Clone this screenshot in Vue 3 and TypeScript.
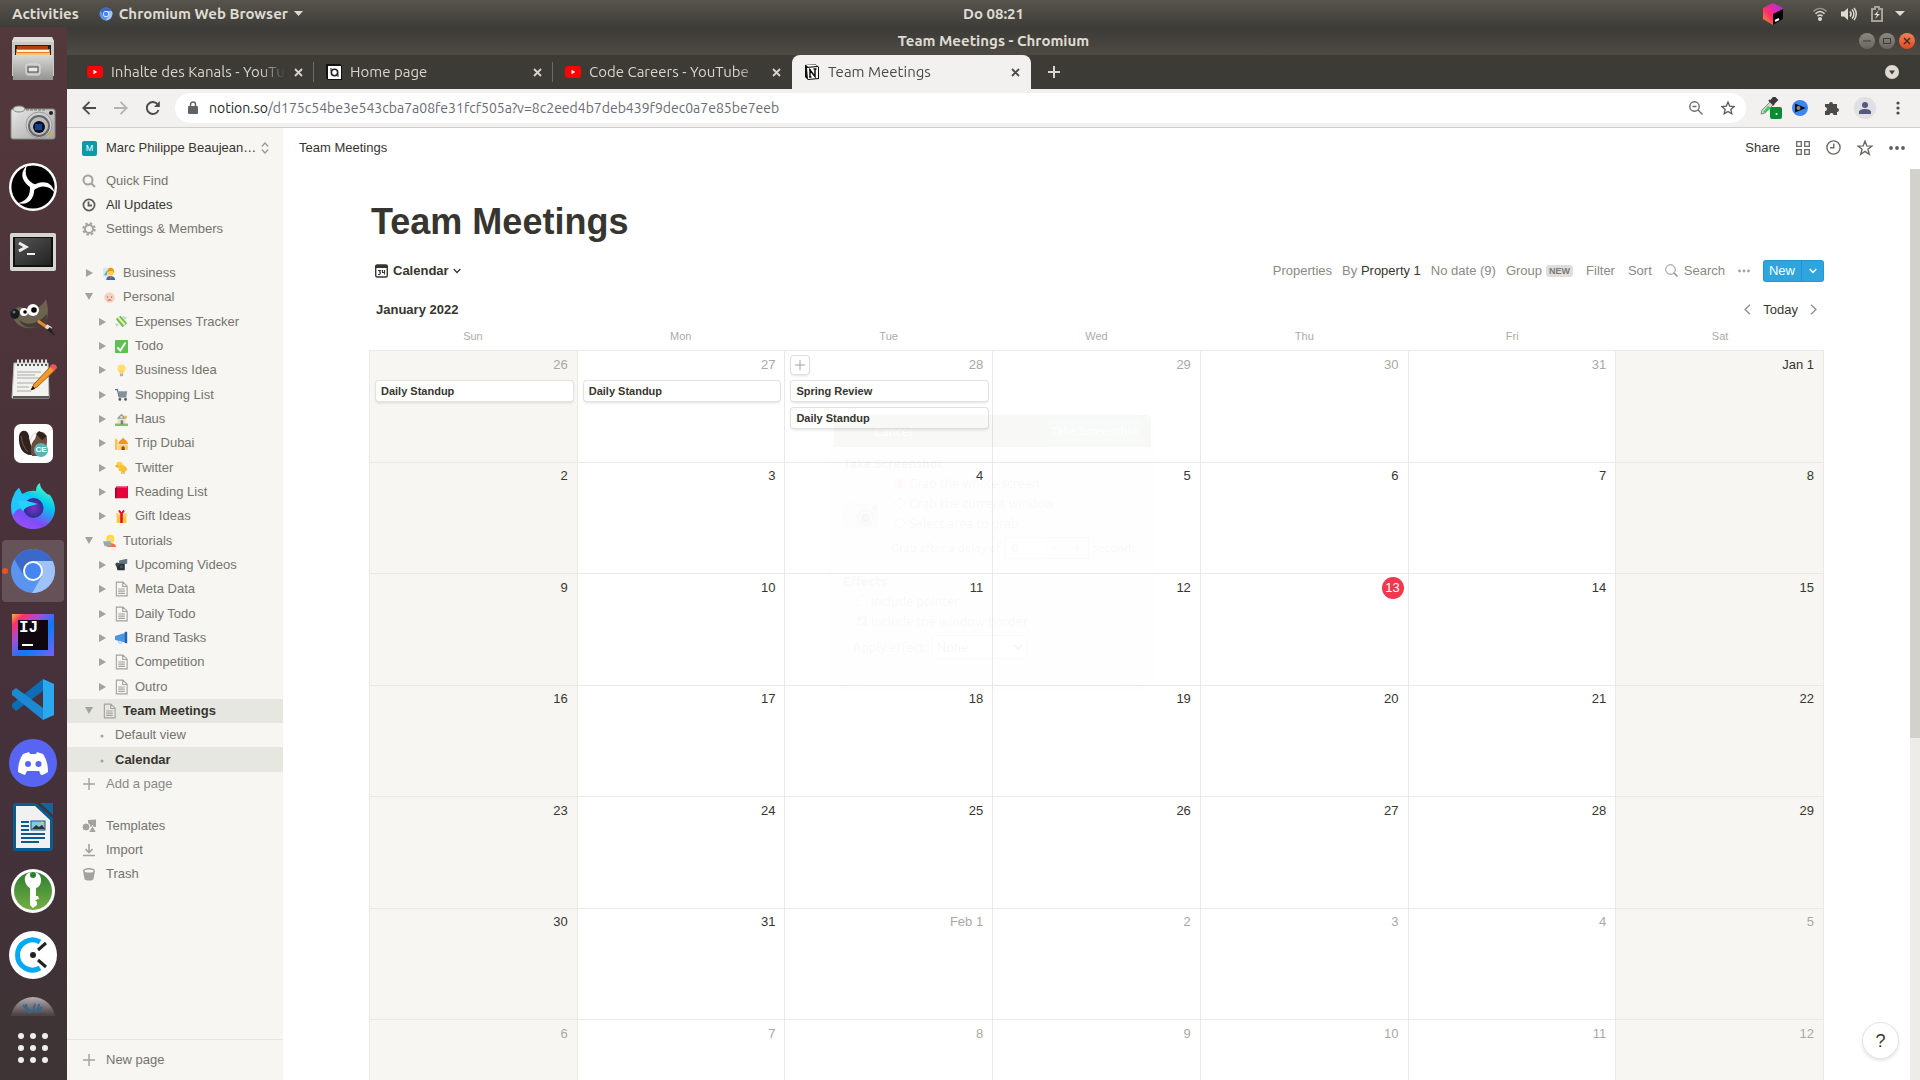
<script setup lang="ts">
interface TreeRow {
  label: string
  icon?: string
  level: number
  kind: 'closed' | 'open' | 'view' | 'add'
  active?: boolean
}

interface DockApp {
  id: string
  name: string
  active?: boolean
  mark?: string
}

interface Day {
  label: string
  muted?: boolean
  today?: boolean
  weekend: boolean
  hovered?: boolean
  events: string[]
}

const dockApps: DockApp[] = [
  { id: 'files', name: 'Files' },
  { id: 'camera', name: 'Screenshot' },
  { id: 'obs', name: 'OBS Studio' },
  { id: 'terminal', name: 'Terminal' },
  { id: 'gimp', name: 'GIMP' },
  { id: 'notes', name: 'Text Editor' },
  { id: 'dbeaver', name: 'DBeaver', mark: 'CE' },
  { id: 'firefox', name: 'Firefox Developer Edition' },
  { id: 'chromium', name: 'Chromium', active: true },
  { id: 'idea', name: 'IntelliJ IDEA', mark: 'IJ' },
  { id: 'vscode', name: 'Visual Studio Code' },
  { id: 'discord', name: 'Discord' },
  { id: 'writer', name: 'LibreOffice Writer' },
  { id: 'keepass', name: 'KeePassXC' },
  { id: 'clockify', name: 'Clockify' },
  { id: 'planet', name: 'Eclipse' },
]

const tabs = [
  { title: 'Inhalte des Kanals - YouTube', icon: 'youtube' },
  { title: 'Home page', icon: 'homepage' },
  { title: 'Code Careers - YouTube', icon: 'youtube' },
  { title: 'Team Meetings', icon: 'notion', active: true },
]

const tree: TreeRow[] = [
  { label: 'Business', icon: 'e-teacher', level: 0, kind: 'closed' },
  { label: 'Personal', icon: 'e-face', level: 0, kind: 'open' },
  { label: 'Expenses Tracker', icon: 'e-money', level: 1, kind: 'closed' },
  { label: 'Todo', icon: 'e-check', level: 1, kind: 'closed' },
  { label: 'Business Idea', icon: 'e-bulb', level: 1, kind: 'closed' },
  { label: 'Shopping List', icon: 'e-cart', level: 1, kind: 'closed' },
  { label: 'Haus', icon: 'e-house', level: 1, kind: 'closed' },
  { label: 'Trip Dubai', icon: 'e-mosque', level: 1, kind: 'closed' },
  { label: 'Twitter', icon: 'e-bird', level: 1, kind: 'closed' },
  { label: 'Reading List', icon: 'e-book', level: 1, kind: 'closed' },
  { label: 'Gift Ideas', icon: 'e-gift', level: 1, kind: 'closed' },
  { label: 'Tutorials', icon: 'e-coder', level: 0, kind: 'open' },
  { label: 'Upcoming Videos', icon: 'e-video', level: 1, kind: 'closed' },
  { label: 'Meta Data', icon: 'page', level: 1, kind: 'closed' },
  { label: 'Daily Todo', icon: 'page', level: 1, kind: 'closed' },
  { label: 'Brand Tasks', icon: 'e-horn', level: 1, kind: 'closed' },
  { label: 'Competition', icon: 'page', level: 1, kind: 'closed' },
  { label: 'Outro', icon: 'page', level: 1, kind: 'closed' },
  { label: 'Team Meetings', icon: 'page', level: 0, kind: 'open', active: true },
  { label: 'Default view', level: 1, kind: 'view' },
  { label: 'Calendar', level: 1, kind: 'view', active: true },
  { label: 'Add a page', level: 0, kind: 'add' },
]

const weekdays = ['Sun', 'Mon', 'Tue', 'Wed', 'Thu', 'Fri', 'Sat']

const events: Record<string, string[]> = {
  '2021-11-26': ['Daily Standup'],
  '2021-11-27': ['Daily Standup'],
  '2021-11-28': ['Spring Review', 'Daily Standup'],
}

const days: Day[] = Array.from({ length: 49 }, (_, i) => {
  const date = new Date(2021, 11, 26 + i)
  const n = date.getDate()
  const month = date.getMonth()
  const names: Record<number, string> = { 0: 'Jan', 1: 'Feb' }
  return {
    label: n === 1 ? `${names[month]} 1` : String(n),
    muted: month !== 0,
    today: month === 0 && n === 13,
    weekend: i % 7 === 0 || i % 7 === 6,
    hovered: i === 2,
    events: events[`${date.getFullYear()}-${month}-${n}`] ?? [],
  }
})
</script>

<template>
  <svg class="sprite" width="0" height="0" aria-hidden="true">
    <defs>
      <linearGradient id="g-steel" x1="0" y1="0" x2="0" y2="1"><stop offset="0" stop-color="#d8d8d6" /><stop offset="1" stop-color="#939391" /></linearGradient>
      <linearGradient id="g-cam" x1="0" y1="0" x2="1" y2="1"><stop offset="0" stop-color="#e8e8e8" /><stop offset="1" stop-color="#a4a4a4" /></linearGradient>
      <linearGradient id="g-term" x1="0" y1="0" x2="1" y2="1"><stop offset="0" stop-color="#555" /><stop offset="1" stop-color="#222" /></linearGradient>
      <linearGradient id="g-fox" x1="0.8" y1="0" x2="0.3" y2="1"><stop offset="0" stop-color="#54ffbd" /><stop offset="0.4" stop-color="#00c8f0" /><stop offset="0.75" stop-color="#7b4df5" /><stop offset="1" stop-color="#9a50ff" /></linearGradient>
      <radialGradient id="g-globe"><stop offset="0" stop-color="#7a35c9" /><stop offset="1" stop-color="#2f2c94" /></radialGradient>
      <linearGradient id="g-idea" x1="0" y1="0" x2="1" y2="1"><stop offset="0" stop-color="#fdb338" /><stop offset="0.15" stop-color="#fe2f6b" /><stop offset="0.35" stop-color="#a04fd8" /><stop offset="0.6" stop-color="#087cfa" /><stop offset="1" stop-color="#7b5ff5" /></linearGradient>
      <linearGradient id="g-key" x1="0" y1="0" x2="0" y2="1"><stop offset="0" stop-color="#2f7d32" /><stop offset="1" stop-color="#74b043" /></linearGradient>
      <linearGradient id="g-planet" x1="0" y1="0" x2="0" y2="1"><stop offset="0" stop-color="#b4aeb2" /><stop offset="0.4" stop-color="#4f4347" /><stop offset="1" stop-color="#40363a" /></linearGradient>
      <linearGradient id="g-cube" x1="0" y1="1" x2="1" y2="0"><stop offset="0" stop-color="#ff9a1f" /><stop offset="0.4" stop-color="#ff2d6d" /><stop offset="1" stop-color="#a32bff" /></linearGradient>
      <clipPath id="c-chrome"><circle cx="24" cy="24" r="22" /></clipPath>
    </defs>

    <symbol id="files" viewBox="0 0 48 48">
      <path d="M5 2h38l2 4v35H3V6z" fill="#c9c9c7" /><path d="M5 2h38l2 5H3z" fill="#dcdcda" />
      <path d="M6 10h36v12H6z" fill="#222" /><path d="M8 11h31v3H8z" fill="#b23e12" /><path d="M7 14h34v8H7z" fill="#e77c22" /><path d="M8 15h32v2H8z" fill="#fff0d8" /><path d="M7 18h34v2H7z" fill="#f7c27a" />
      <path d="M4 20h40v25H4z" fill="url(#g-steel)" /><rect x="17" y="29" width="14" height="11" rx="2" fill="#c2c2c2" stroke="#ddd" /><rect x="19" y="32" width="10" height="5" fill="#e8e8e6" stroke="#444" />
    </symbol>
    <symbol id="camera" viewBox="0 -1 48 48">
      <rect x="2" y="9" width="44" height="30" rx="2" fill="url(#g-cam)" stroke="#8a8a8a" /><ellipse cx="10" cy="9" rx="6" ry="3" fill="#ddd" stroke="#888" /><path d="M17 10h20" stroke="#777" stroke-dasharray="3 1" />
      <circle cx="30" cy="25" r="13" fill="#d0d0d0" stroke="#999" /><circle cx="30" cy="26" r="10" fill="#bbb" stroke="#666" stroke-width="2" /><circle cx="30" cy="27" r="6" fill="#0c0f18" /><rect x="26" y="24" width="7" height="6" fill="#16408c" /><circle cx="42" cy="13" r="2" fill="#222" /><rect x="40" y="33" width="3" height="3" fill="#e8a23a" />
    </symbol>
    <symbol id="obs" viewBox="0 0 48 48">
      <circle cx="24" cy="24" r="24" fill="#fff" /><circle cx="24" cy="24" r="21.6" fill="#000" />
      <g fill="#fff">
        <path d="M25 26C14 21 9 11 18 2.500C15 10 17 18 27 22z" />
        <path d="M25 26C14 21 9 11 18 2.500C15 10 17 18 27 22z" transform="rotate(120 24 24)" />
        <path d="M25 26C14 21 9 11 18 2.500C15 10 17 18 27 22z" transform="rotate(240 24 24)" />
      </g>
    </symbol>
    <symbol id="terminal" viewBox="0 -1 48 48">
      <rect x="1" y="5" width="46" height="38" rx="2" fill="#d5d5d2" /><rect x="4" y="9" width="40" height="30" fill="#111" /><rect x="6" y="10" width="36" height="27" fill="url(#g-term)" /><path d="M10 15l7 4-7 4" fill="none" stroke="#eee" stroke-width="3" /><path d="M18 26h8" stroke="#eee" stroke-width="2" />
    </symbol>
    <symbol id="gimp" viewBox="0 0 48 48">
      <path d="M4 20c5-6 9-4 13-2c8 2 15-1 20-10c4 14 2 26-8 28c-12 3-20 0-25-9z" fill="#6b624f" /><path d="M10 29c8 6 18 5 28-6c0 8-4 13-10 13c-10 2-15-1-18-7z" fill="#453f33" />
      <ellipse cx="6" cy="23" rx="4.500" ry="5" fill="#171b22" /><circle cx="5" cy="21" r="1.500" fill="#6a7280" /><circle cx="15" cy="21" r="4" fill="#fff" /><circle cx="24" cy="19" r="6" fill="#fff" /><circle cx="16" cy="21" r="1.800" /><circle cx="25" cy="19" r="2.800" />
      <path d="M29 30l10 7" stroke="#e8892b" stroke-width="3" /><path d="M37 35l5 3" stroke="#ddd" stroke-width="4" /><path d="M41 36l5 9-8-6z" fill="#222" />
    </symbol>
    <symbol id="notes" viewBox="0 0 48 48">
      <path d="M5 8h34l1 35H3z" fill="#f2f2ee" stroke="#bbb" /><path d="M4 42h36" stroke="#555" stroke-width="2" /><path d="M8 7h30" stroke="#ddd" stroke-width="5" stroke-dasharray="2 2" /><path d="M8 10h30" stroke="#555" stroke-dasharray="2 2" stroke-width="2" />
      <path d="M8 17h24M8 20h18M8 23h26M8 28h20M8 32h12M8 36h14" stroke="#aaa" /><path d="M22 35l3-6L42 11l4 4L28 32z" fill="#f39a2d" stroke="#a55a14" /><path d="M41 11c2-3 7-2 7 2l-3 3z" fill="#e55" /><path d="M22 35l2-4 2 3z" fill="#111" />
    </symbol>
    <symbol id="dbeaver" viewBox="0 0 48 48">
      <rect x="5" y="5" width="39" height="39" rx="7" fill="#fff" /><path d="M22 36C14 36 9 28 10 17c1-7 9-7 10 0c0 5 3 8 3 19z" fill="#30231e" /><path d="M12 17c1 7 3 12 7 16" stroke="#6b564c" fill="none" /><path d="M23 37c-3-8 0-14 3-17l2-6c4-3 10 0 10 6c0 4 0 10-4 17z" fill="#6d4c3d" /><path d="M27 15l3-3 8 5-5 4z" fill="#2f211b" /><path d="M22 24c-1-6 1-8 5-10" stroke="#e9e4df" stroke-width="1.500" fill="none" /><circle cx="32" cy="31" r="7" fill="#56b6b5" />
    </symbol>
    <symbol id="firefox" viewBox="0 0 48 48">
      <path d="M5 12c1-4 4-6 5-7l3 6c5-3 10-4 14-3c0-4 1-6 4-8c0 5 4 8 7 11l3 1c5 7 6 14 4 20c-3 9-11 14-20 14C12 46 2 38 2 26c0-5 1-10 3-14z" fill="url(#g-fox)" /><path d="M5 12c1-4 4-6 5-7l3 6 4 1 7 3 5 5-8 2-8 3c-4 0-8 4-9 8c-3-8-2-16 1-21z" fill="#1ec8ff" /><circle cx="24.500" cy="25" r="10" fill="url(#g-globe)" /><path d="M9 18l9 0 11 3-8 2c-3 1-5 2-7 5c-2-2-4-6-5-10z" fill="#23d3fb" />
    </symbol>
    <symbol id="chromium" viewBox="0 0 48 48">
      <g clip-path="url(#c-chrome)"><path d="M0 0h48v48H0z" fill="#5b94ef" /><path d="M4 10L24 -2l24 10v10H24l-9 11z" fill="#3a69c9" /><path d="M24 14h24v34H22l11-19z" fill="#9fc2fa" /></g><circle cx="24" cy="24" r="10" fill="#fff" /><circle cx="24" cy="24" r="8" fill="#4586f3" />
    </symbol>
    <symbol id="idea" viewBox="0 0 48 48">
      <rect x="3" y="3" width="42" height="42" fill="url(#g-idea)" /><rect x="9" y="9" width="30" height="30" fill="#100610" /><path d="M13 34h11" stroke="#fff" stroke-width="2" />
    </symbol>
    <symbol id="vscode" viewBox="0 0 48 48">
      <path d="M34 4v12L7 36l-4-4v-3z" fill="#0f6db5" /><path d="M34 45V33L7 13l-4 3v4z" fill="#1c8ad3" /><path d="M34 4l11 5v31l-11 5z" fill="#2aa8f0" />
    </symbol>
    <symbol id="discord" viewBox="0 0 48 48">
      <circle cx="24" cy="24" r="24" fill="#5865f2" /><path d="M14 15l6-2 1 2h6l1-2 6 2c4 6 5 12 5 18c-3 2-5 3-7 3l-2-4h-12l-2 4c-3-1-5-2-7-3c0-6 1-12 5-18z" fill="#fff" /><circle cx="19" cy="25" r="3" fill="#5865f2" /><circle cx="29.500" cy="25" r="3" fill="#5865f2" />
    </symbol>
    <symbol id="writer" viewBox="0 0 48 48">
      <path d="M7 0h20l17 15v30a3 3 0 0 1-3 3H7a3 3 0 0 1-3-3V3a3 3 0 0 1 3-3z" fill="#0b5c8c" /><path d="M7 3h19l15 14v28H7z" fill="#f1f1f1" /><path d="M31 0h13v12z" fill="#0e689e" /><path d="M12 19h8M12 23h8M12 27h8M12 31h24M12 35h24M12 39h18" stroke="#0b5c8c" stroke-width="2" /><rect x="22" y="18" width="14" height="9" fill="#83c9ea" stroke="#0b5c8c" /><path d="M23 26l4-4 3 2 3-2 3 4z" fill="#333" /><circle cx="33" cy="20" r="1.500" fill="#f0c23a" />
    </symbol>
    <symbol id="keepass" viewBox="0 0 48 48">
      <circle cx="24" cy="24" r="22" fill="#fff" /><circle cx="24" cy="24" r="19" fill="url(#g-key)" /><path d="M24 5c-6 0-9 4-8 9c1 4 3 6 5 7v17l3 3 4-3v-3l-2-2 4-1-1-3h-2v-8c4-1 5-5 5-8c0-5-3-8-8-8z" fill="#fff" /><circle cx="24" cy="8" r="3" fill="#2f7d32" />
    </symbol>
    <symbol id="clockify" viewBox="0 0 48 48">
      <circle cx="24" cy="24" r="24" fill="#fff" /><path d="M31 11a15 15 0 1 0 0 26" fill="none" stroke="#03a9f4" stroke-width="5" /><circle cx="24" cy="24" r="3" fill="#222" /><path d="M29 19l8-7M29 29l8 7" stroke="#222" stroke-width="3" />
    </symbol>
    <symbol id="planet" viewBox="0 0 48 48">
      <circle cx="24" cy="24" r="22" fill="url(#g-planet)" /><path d="M14 10l7 8M17 9c0 5 3 6 5 9M24 17l2-8M26 17c3-3 4-5 4-8M28 17l5-5" stroke="#34688f" stroke-width="2" fill="none" />
    </symbol>

    <symbol id="youtube" viewBox="0 0 16 16"><rect x="0" y="2" width="16" height="12" rx="3" fill="#f00" /><path d="M6.500 5.800v4.400L10.200 8z" fill="#fff" /></symbol>
    <symbol id="homepage" viewBox="0 0 16 16"><path d="M0 0h14l2 2v14H2L0 14z" fill="#111" /><rect x="2" y="2" width="13" height="13" fill="#fff" /><circle cx="8.500" cy="8.500" r="3.200" fill="none" stroke="#222" stroke-width="1.600" /><path d="M5 4v3M12 10v3" stroke="#222" /></symbol>
    <symbol id="notion" viewBox="0 0 16 16"><path d="M1 1l10-1 4 3v12l-11 1-3-3z" fill="#111" /><path d="M3 4l11-1v11L4 15z" fill="#fff" /><path d="M2 1l9-.5 2 1.500-9 .8z" fill="#fff" /><path d="M6 13V6l5 6.500V5M5 6h2M9.500 5h3M5 13h2.500" stroke="#111" stroke-width="1.500" fill="none" /></symbol>

    <symbol id="page" viewBox="0 0 16 16"><path d="M2.500.7h7L14 5v10.300H2.500zM9.300 1v4.300H14M4.500 8h7M4.500 10.300h7M4.500 12.600h7" fill="none" stroke="#a3a29e" stroke-width="1.200" /></symbol>
    <symbol id="e-teacher" viewBox="0 0 16 16"><rect x="0" y="1" width="12" height="11" fill="#d5eaf0" /><path d="M1 10l4-6v6z" fill="#6ba7c4" /><path d="M4 16c0-4 3-5 5-5s6 1 6 5z" fill="#2c6fb5" /><path d="M8 11h3l-1.500 5z" fill="#e55" /><circle cx="9.500" cy="6.500" r="4" fill="#ffcf4b" /><path d="M5 7c0-8 9-8 9 0l-2-2-4 0z" fill="#e69a12" /></symbol>
    <symbol id="e-face" viewBox="0 0 16 16"><circle cx="8" cy="8" r="6.500" fill="#f5d3c3" /><circle cx="5.500" cy="7.500" r="1" fill="#a9786b" /><circle cx="10.500" cy="7.500" r="1" fill="#a9786b" /><path d="M5 12c2-3 4-3 6 0z" fill="#d77" /></symbol>
    <symbol id="e-money" viewBox="0 0 16 16"><path d="M1 5l6-4 8 9-6 5z" fill="#6cc25c" /><path d="M4 3l8 9" stroke="#f4e8a6" stroke-width="2.500" /><path d="M9 1l6 2-4 3zM0 10l5 1-3 4z" fill="#c3d9c0" /></symbol>
    <symbol id="e-check" viewBox="0 0 16 16"><rect width="16" height="16" rx="1" fill="#60bf52" /><path d="M3 9l3.500 4L13 3" fill="none" stroke="#fff" stroke-width="2.300" /></symbol>
    <symbol id="e-bulb" viewBox="0 0 16 16"><circle cx="8" cy="5.500" r="5" fill="#ffe070" /><path d="M5 8h6l-1 4H6z" fill="#f9d45c" /><path d="M6 12h4v3H6z" fill="#a8b2b8" /></symbol>
    <symbol id="e-cart" viewBox="0 0 16 16"><path d="M0 2h3l2 9h9" fill="none" stroke="#62727a" stroke-width="1.500" /><path d="M4 4h11l-1 6H5z" fill="#82939c" /><circle cx="6" cy="14" r="1.700" fill="#4d5a60" /><circle cx="13" cy="14" r="1.700" fill="#4d5a60" /></symbol>
    <symbol id="e-house" viewBox="0 0 16 16"><path d="M3 7h10v7H3z" fill="#efe3b5" /><path d="M2 7l6-6 6 6z" fill="#8b9a9f" /><path d="M0 13h16v3H0z" fill="#83bd68" /><path d="M7 9h3v5H7z" fill="#6d7d96" /><circle cx="8" cy="5" r="1.500" fill="#efe3b5" /><circle cx="13" cy="5" r="2" fill="#e5b95c" /></symbol>
    <symbol id="e-mosque" viewBox="0 0 16 16"><path d="M1 1l2 3v12H0V4z" fill="#ffc24b" /><path d="M4 10h12v6H4z" fill="#ffcf66" /><path d="M4 9c0-4 4-5 6-8c2 3 6 4 6 8z" fill="#f5931e" /><path d="M8 16v-3c1-2 3-2 4 0v3z" fill="#9b4a22" /></symbol>
    <symbol id="e-bird" viewBox="0 0 16 16"><circle cx="5.500" cy="5" r="4" fill="#ffd23b" /><path d="M4 6c4-3 11 0 11 5l-4 3-6-2z" fill="#fbc02d" /><path d="M0 6l3-1v3z" fill="#f57f17" /><path d="M9 13l-1 3M11 13v3" stroke="#e07a1a" /></symbol>
    <symbol id="e-book" viewBox="0 0 16 16"><path d="M2 0h14v15H1V2z" fill="#e4003a" /><path d="M2 1h13" stroke="#f5c2cf" /><path d="M1 2v13" stroke="#a50028" stroke-width="2" /></symbol>
    <symbol id="e-gift" viewBox="0 0 16 16"><path d="M2 6h12v10H2z" fill="#f7c948" /><path d="M1 4h14v3H1z" fill="#fbd869" /><path d="M6.500 3h3v13h-3z" fill="#e4003a" /><path d="M8 4C4 4 3 0 6 0l2 3 2-3c3 0 2 4-2 4z" fill="#e4003a" /></symbol>
    <symbol id="e-coder" viewBox="0 0 16 16"><circle cx="9" cy="6" r="5" fill="#ffe11a" /><circle cx="9" cy="7" r="3" fill="#f4cfa0" /><path d="M5 16c0-4 2-5 4-5s7 1 7 5z" fill="#f0713d" /><path d="M0 9h9l2 6H2z" fill="#93a9b8" /></symbol>
    <symbol id="e-video" viewBox="0 0 16 16"><path d="M5 3l10-2v6L5 8z" fill="#607684" /><path d="M1 7h11v8H3z" fill="#273038" /><circle cx="3" cy="8" r="2.500" fill="#3b464e" /><circle cx="8" cy="11" r="2" fill="#46535c" /></symbol>
    <symbol id="e-horn" viewBox="0 0 16 16"><path d="M0 6l13-4v12L0 11z" fill="#4a95e8" /><path d="M12 1h3v14h-3z" fill="#2560aa" /><path d="M4 12l1 3h3v-2" fill="none" stroke="#8bbdf2" /></symbol>
  </svg>

  <div class="desktop">
    <header class="panel">
      <div class="panel-left">
        <button class="panel-btn">Activities</button>
        <button class="panel-btn app-menu">
          <svg width="14" height="14"><use href="#chromium" /></svg>
          Chromium Web Browser
          <svg width="9" height="5" viewBox="0 0 9 5"><path d="M0 0h9L4.500 5z" fill="currentColor" /></svg>
        </button>
      </div>
      <time class="clock">Do 08:21</time>
      <div class="tray">
        <svg class="cube" width="20" height="22" viewBox="0 0 20 22"><path d="M10 0l10 5v11l-10 6L0 16V5z" fill="url(#g-cube)" /><path d="M10 11l10-5v10l-10 6z" fill="#000" /><path d="M12 18l4-2" stroke="#fff" stroke-width="2" /></svg>
        <svg width="14" height="14" viewBox="0 0 14 14" fill="none" stroke="#dfdbd2" stroke-width="1.600"><path d="M.5 4.500c4-4 9-4 13 0" opacity=".5" /><path d="M2.500 6.800c3-3 6-3 9 0" /><path d="M4.500 9.200c2-1.800 3-1.800 5 0" /><circle cx="7" cy="12" r="1.200" fill="#dfdbd2" /></svg>
        <svg width="16" height="14" viewBox="0 0 16 14" fill="none" stroke="#dfdbd2" stroke-width="1.500"><path d="M0 4.500h3L7 1v12L3 9.500H0z" fill="#dfdbd2" stroke="none" /><path d="M9 4.500c1.300 1.500 1.300 3.500 0 5M11 2.500c2.500 2.500 2.500 6.500 0 9M13 1c3 3.500 3 8.500 0 12" /></svg>
        <svg width="12" height="16" viewBox="0 0 12 16"><path d="M1 3h3V1h4v2h3v12H1z" fill="none" stroke="#a5a29a" stroke-width="2" /><path d="M8 4L3 9h3l-2 4 5-5H6z" fill="#dfdbd2" /></svg>
        <svg class="tray-arrow" width="10" height="5" viewBox="0 0 10 5"><path d="M0 0h10L5 5z" fill="#dfdbd2" /></svg>
      </div>
    </header>

    <div class="workspace">
      <nav class="dock" aria-label="Dock">
        <div class="dock-apps">
          <button v-for="app in dockApps" :key="app.id" class="dock-app" :class="[app.id, { running: app.active }]" :aria-label="app.name">
            <svg width="48" height="48"><use :href="'#' + app.id" /></svg>
            <span v-if="app.mark" class="mark">{{ app.mark }}</span>
          </button>
        </div>
        <button class="dock-grid" aria-label="Show Applications">
          <svg width="30" height="30" viewBox="0 0 30 30" fill="#eee">
            <template v-for="r in 3" :key="r"><circle v-for="c in 3" :key="c" :cx="c * 12 - 9" :cy="r * 12 - 9" r="3" /></template>
          </svg>
        </button>
      </nav>

      <section class="window">
        <header class="titlebar">
          <span class="window-title">Team Meetings - Chromium</span>
          <div class="window-buttons">
            <button aria-label="Minimize"><svg width="8" height="8" viewBox="0 0 8 8"><path d="M0 4h8" stroke="#3c3b37" /></svg></button>
            <button aria-label="Maximize"><svg width="8" height="8" viewBox="0 0 8 8"><path d="M.5 1.500h7v5h-7z" stroke="#3c3b37" fill="none" /></svg></button>
            <button class="close" aria-label="Close"><svg width="8" height="8" viewBox="0 0 8 8"><path d="M1 1l6 6M7 1L1 7" stroke="#3c2a22" stroke-width="1.400" /></svg></button>
          </div>
        </header>

        <div class="tabs">
          <div v-for="tab in tabs" :key="tab.title" class="tab" :class="{ current: tab.active }">
            <svg class="favicon" width="16" height="16"><use :href="'#' + tab.icon" /></svg>
            <span class="tab-title">{{ tab.title }}</span>
            <button class="tab-close" aria-label="Close tab"><svg width="9" height="9" viewBox="0 0 9 9"><path d="M1 1l7 7M8 1L1 8" stroke="currentColor" stroke-width="1.800" /></svg></button>
          </div>
          <button class="tab-new" aria-label="New tab"><svg width="12" height="12" viewBox="0 0 12 12"><path d="M6 0v12M0 6h12" stroke="currentColor" stroke-width="2" /></svg></button>
          <button class="tab-search" aria-label="Search tabs"><svg width="14" height="14" viewBox="0 0 14 14"><circle cx="7" cy="7" r="7" fill="#dfdbd2" /><path d="M4 5.500h6L7 9.500z" fill="#3c3b37" /></svg></button>
        </div>

        <div class="toolbar">
          <button aria-label="Back"><svg width="14" height="14" viewBox="0 0 14 14" fill="none" stroke="#4a4a4a" stroke-width="1.800"><path d="M14 7H1M7.500.8L1.200 7l6.300 6.200" /></svg></button>
          <button aria-label="Forward"><svg width="14" height="14" viewBox="0 0 14 14" fill="none" stroke="#b4b3b0" stroke-width="1.800"><path d="M0 7h13M6.500.8L12.800 7l-6.300 6.200" /></svg></button>
          <button aria-label="Reload"><svg width="14" height="14" viewBox="0 0 14 14" fill="none" stroke="#4a4a4a" stroke-width="1.900"><path d="M12.500 9A6 6 0 1 1 11.500 3.200" /><path d="M13.800 0v6H8z" fill="#4a4a4a" stroke="none" /></svg></button>
          <div class="omnibox">
            <svg width="10" height="14" viewBox="0 0 10 14"><rect x="0" y="5" width="10" height="8" rx="1" fill="#5f6368" /><path d="M2.500 5V3.500a2.500 2.500 0 0 1 5 0V5" fill="none" stroke="#5f6368" stroke-width="1.500" /></svg>
            <span class="url"><b>notion.so</b>/d175c54be3e543cba7a08fe31fcf505a?v=8c2eed4b7deb439f9dec0a7e85be7eeb</span>
            <button aria-label="Zoom"><svg width="14" height="14" viewBox="0 0 14 14" fill="none" stroke="#6b6b6b" stroke-width="1.400"><circle cx="5.500" cy="5.500" r="4.700" /><path d="M9 9l4.500 4.500M3.500 5.500h4" /></svg></button>
            <button aria-label="Bookmark"><svg width="14" height="14" viewBox="0 0 14 14" fill="none" stroke="#5a5a5a" stroke-width="1.300"><path d="M7 1l1.700 4.100 4.500.4-3.400 2.900 1 4.400L7 10.500l-3.800 2.300 1-4.400L.8 5.500l4.500-.4z" /></svg></button>
          </div>
          <button class="ext picker" aria-label="Color picker"><svg width="22" height="22" viewBox="0 0 22 22"><path d="M11 4l3 3-9 9-4 1 1-4z" fill="#d6d6d6" stroke="#888" /><path d="M8 9l3 2-6 5-2-1z" fill="#2bd84f" /><path d="M9 3l5 5M11 4l3-4 3 3-4 4z" stroke="#3a3a3a" stroke-width="2" fill="#3a3a3a" /><rect x="10" y="10" width="12" height="12" rx="2" fill="#0b8a34" /><circle cx="16.500" cy="17" r="1" fill="#fff" /></svg></button>
          <button class="ext" aria-label="Player"><svg width="16" height="16" viewBox="0 0 16 16"><circle cx="8" cy="8" r="8" fill="#3b86f7" /><path d="M3 3.500L14 8 3 12.500z" fill="#111" /><circle cx="6.500" cy="8" r="2" fill="#888" /></svg></button>
          <button class="ext puzzle" aria-label="Extensions"><svg width="16" height="16" viewBox="0 0 16 16"><path d="M1 4h4a2 2 0 1 1 4 0h4v4a2 2 0 1 1 0 4v3H9.500a2 2 0 1 0-4 0H1v-4a2 2 0 1 0 0-4z" fill="#4a4a4a" /></svg></button>
          <button class="profile" aria-label="Profile"><svg width="22" height="22" viewBox="0 0 22 22"><circle cx="11" cy="11" r="11" fill="#dfe0e6" /><circle cx="11" cy="8" r="3" fill="#56597a" /><path d="M5 17v-2c0-4 12-4 12 0v2z" fill="#56597a" /></svg></button>
          <button aria-label="Menu"><svg width="4" height="14" viewBox="0 0 4 14" fill="#4a4a4a"><circle cx="2" cy="2" r="1.600" /><circle cx="2" cy="7" r="1.600" /><circle cx="2" cy="12" r="1.600" /></svg></button>
        </div>

        <div class="page">
          <aside class="sidebar">
            <button class="user">
              <span class="avatar">M</span>
              <span class="user-name">Marc Philippe Beaujean…</span>
              <svg width="8" height="12" viewBox="0 0 8 12" fill="none" stroke="#9b9a97" stroke-width="1.300"><path d="M.8 4.500L4 1l3.200 3.500M.8 7.500L4 11l3.200-3.500" /></svg>
            </button>
            <div class="menu main-menu">
              <button><svg width="14" height="14" viewBox="0 0 14 14" fill="none" stroke="#a3a29e" stroke-width="2"><circle cx="6" cy="6" r="4.500" /><path d="M9 9l4 4" /></svg>Quick Find</button>
              <button class="strong"><svg width="14" height="14" viewBox="0 0 14 14" fill="none" stroke="#5f5e5a" stroke-width="1.800"><circle cx="7" cy="7" r="5.600" /><path d="M6.500 3.500V7.500H10" /></svg>All Updates</button>
              <button><svg width="14" height="14" viewBox="0 0 14 14" fill="none" stroke="#a3a29e"><circle cx="7" cy="7" r="4" stroke-width="2" /><circle cx="7" cy="7" r="5.700" stroke-width="2" stroke-dasharray="2.400 2.077" /></svg>Settings &amp; Members</button>
            </div>
            <nav class="tree" aria-label="Pages">
              <a v-for="(row, i) in tree" :key="i" href="#" class="row" :class="[row.kind, 'level-' + row.level, { active: row.active }]">
                <svg v-if="row.kind === 'closed'" class="arrow" width="8" height="8" viewBox="0 0 8 8"><path d="M1 0l7 4-7 4z" /></svg>
                <svg v-else-if="row.kind === 'open'" class="arrow" width="8" height="8" viewBox="0 0 8 8"><path d="M0 0h8L4 7z" /></svg>
                <svg v-else-if="row.kind === 'view'" class="arrow" width="8" height="8" viewBox="0 0 8 8"><circle cx="4" cy="5" r="1.500" /></svg>
                <svg v-else width="14" height="14" viewBox="0 0 14 14"><path d="M7 1v12M1 7h12" stroke="#a3a29e" stroke-width="1.400" /></svg>
                <svg v-if="row.icon" class="row-icon" :class="{ doc: row.icon === 'page' }"><use :href="'#' + row.icon" /></svg>
                <span>{{ row.label }}</span>
              </a>
            </nav>
            <div class="menu extras">
              <button><svg width="14" height="14" viewBox="0 0 14 14" fill="#a3a29e"><path d="M6 1l8-.5V8H6z" /><circle cx="4" cy="8" r="4" stroke="#f7f6f2" /><path d="M10.500 6.500l4 7H6.500z" stroke="#f7f6f2" /></svg>Templates</button>
              <button><svg width="14" height="14" viewBox="0 0 14 14" fill="none" stroke="#a3a29e" stroke-width="1.600"><path d="M7 1v8M3.500 6L7 9.500 10.500 6M1 12.500h12" /></svg>Import</button>
              <button><svg width="14" height="14" viewBox="0 0 14 14"><path d="M1 4c0-4 12-4 12 0l-1.500 8c-.5 2-8.500 2-9 0z" fill="#a3a29e" /><ellipse cx="7" cy="4" rx="4.500" ry="1.500" fill="#f7f6f2" /></svg>Trash</button>
            </div>
            <button class="new-page"><svg width="14" height="14" viewBox="0 0 14 14"><path d="M7 1v12M1 7h12" stroke="#a3a29e" stroke-width="1.400" /></svg>New page</button>
          </aside>

          <main class="content">
            <div class="crumbs">
              <a href="#" class="crumb">Team Meetings</a>
              <div class="page-actions">
                <button class="share">Share</button>
                <button aria-label="Layout"><svg width="14" height="14" viewBox="0 0 14 14" fill="none" stroke="#6b6a66" stroke-width="1.300"><path d="M.7.700h4.600v4.600H.7zM8.700.700h4.600v4.600H8.700zM.7 8.700h4.600v4.600H.7zM8.700 8.700h4.600v4.600H8.700z" /></svg></button>
                <button aria-label="History"><svg width="15" height="15" viewBox="0 0 15 15" fill="none" stroke="#6b6a66" stroke-width="1.400"><circle cx="7.500" cy="7.500" r="6.600" /><path d="M7.800 3.500v4.300H4" /></svg></button>
                <button aria-label="Favorite"><svg width="16" height="16" viewBox="0 0 16 16" fill="none" stroke="#6b6a66" stroke-width="1.400"><path d="M8 1l1.800 4.900 5.200.2-4.100 3.200 1.400 5L8 11.400l-4.300 2.900 1.400-5L1 6.100l5.200-.2z" /></svg></button>
                <button aria-label="More"><svg width="16" height="4" viewBox="0 0 16 4" fill="#5f5e5a"><circle cx="2" cy="2" r="1.900" /><circle cx="8" cy="2" r="1.900" /><circle cx="14" cy="2" r="1.900" /></svg></button>
              </div>
            </div>

            <div class="scroller">
              <div class="body">
                <h1>Team Meetings</h1>
                <div class="views">
                  <button class="view-name">
                    <svg width="13" height="14" viewBox="0 0 13 14"><rect x=".7" y="1" width="11.600" height="12" rx="1.500" fill="none" stroke="#37352f" stroke-width="1.400" /><path d="M.5 1h12v3H.5z" fill="#37352f" /><path d="M3 6.500h2.500L4.500 8l1 .8-1 1.700H3M7 8.500h3M9.500 6v4.500M7.500 6v3" stroke="#37352f" stroke-width="1.100" fill="none" /></svg>
                    <span>Calendar</span>
                    <svg width="8" height="6" viewBox="0 0 8 6"><path d="M.7 1L4 4.500 7.300 1" fill="none" stroke="#37352f" stroke-width="1.300" /></svg>
                  </button>
                  <div class="tools">
                    <button class="tight">Properties</button>
                    <button>By <b>Property 1</b></button>
                    <button class="tight">No date (9)</button>
                    <button class="group">Group<span class="badge">NEW</span></button>
                    <button>Filter</button>
                    <button>Sort</button>
                    <button class="search"><svg width="13" height="13" viewBox="0 0 13 13" fill="none" stroke="#8f8e8a"><circle cx="5.500" cy="5.500" r="4.800" /><path d="M9 9l3.500 3.500" stroke-width="1.400" /></svg>Search</button>
                    <button class="dots" aria-label="More options"><svg width="12" height="4" viewBox="0 0 12 4" fill="#a3a29e"><circle cx="1.500" cy="2" r="1.400" /><circle cx="6" cy="2" r="1.400" /><circle cx="10.500" cy="2" r="1.400" /></svg></button>
                    <div class="new">
                      <button>New</button>
                      <button class="new-more" aria-label="Templates"><svg width="8" height="6" viewBox="0 0 8 6"><path d="M.7 1L4 4.500 7.300 1" fill="none" stroke="#fff" stroke-width="1.500" /></svg></button>
                    </div>
                  </div>
                </div>

                <div class="month">
                  <h2>January 2022</h2>
                  <div class="pager">
                    <button aria-label="Previous month"><svg width="7" height="11" viewBox="0 0 7 11"><path d="M6 .7L1 5.500l5 4.800" fill="none" stroke="#8f8e8a" stroke-width="1.300" /></svg></button>
                    <button>Today</button>
                    <button aria-label="Next month"><svg width="7" height="11" viewBox="0 0 7 11"><path d="M1 .7l5 4.800-5 4.800" fill="none" stroke="#8f8e8a" stroke-width="1.300" /></svg></button>
                  </div>
                </div>

                <div class="weekdays"><span v-for="d in weekdays" :key="d">{{ d }}</span></div>
                <div class="grid">
                  <div v-for="(day, i) in days" :key="i" class="day" :class="{ weekend: day.weekend }">
                    <div class="day-head">
                      <button v-if="day.hovered" class="add-card" aria-label="Add a card"><svg width="10" height="10" viewBox="0 0 10 10"><path d="M5 0v10M0 5h10" stroke="#a3a29e" /></svg></button>
                      <span class="num" :class="{ muted: day.muted, today: day.today }">{{ day.label }}</span>
                    </div>
                    <a v-for="(ev, n) in day.events" :key="n" href="#" class="event">{{ ev }}</a>
                  </div>
                </div>
              </div>
              <div class="scrollbar"><div class="thumb"></div></div>
            </div>
            <button class="help" aria-label="Help">?</button>
          </main>
        </div>
      </section>
    </div>

    <form class="ghost" aria-label="Take Screenshot" @submit.prevent>
      <div class="ghost-head"><button type="button">Cancel</button><button type="submit" class="take">Take Screenshot</button></div>
      <div class="ghost-body">
        <strong>Take Screenshot</strong>
        <div class="ghost-grab">
          <svg width="36" height="36"><use href="#camera" /></svg>
          <div class="ghost-options">
            <label><input type="radio" name="grab" checked />Grab the whole screen</label>
            <label><input type="radio" name="grab" />Grab the current window</label>
            <label><input type="radio" name="grab" />Select area to grab</label>
          </div>
        </div>
        <div class="ghost-delay"><label for="delay">Grab after a delay of</label><span class="spin"><input id="delay" type="text" value="0" /><button type="button">−</button><button type="button">+</button></span><span>seconds</span></div>
        <strong>Effects</strong>
        <label class="ghost-check"><input type="checkbox" />Include pointer</label>
        <label class="ghost-check"><input type="checkbox" checked />Include the window border</label>
        <div class="ghost-effect"><label for="effect">Apply effect:</label><select id="effect"><option>None</option></select></div>
      </div>
    </form>
  </div>
</template>

<style>
body {
  overflow: hidden;
}
</style>

<style scoped>
.sprite {
  position: absolute;
}
button {
  padding: 0;
  border: 0;
  background: none;
  color: inherit;
  font: inherit;
  cursor: pointer;
}
a {
  color: inherit;
  text-decoration: none;
}
svg {
  display: block;
  flex: none;
}
.desktop {
  position: relative;
  display: flex;
  flex-direction: column;
  height: 100vh;
  overflow: hidden;
  font: 15px/20px Ubuntu, "Noto Sans", sans-serif;
  color: #37352f;
}

/* GNOME panel */
.panel {
  flex: none;
  display: grid;
  grid-template-columns: 67px minmax(0, 1fr) auto minmax(0, 1fr);
  align-items: center;
  height: 27px;
  background: linear-gradient(#58544c, #3e3d39);
  color: #dfdbd2;
  font-weight: 700;
}
.panel-left {
  grid-column: 1 / 3;
  display: flex;
  gap: 20px;
  padding-left: 12px;
}
.panel-btn {
  display: flex;
  align-items: center;
  gap: 6px;
}
.tray {
  display: flex;
  justify-content: flex-end;
  align-items: center;
  gap: 14px;
  padding-right: 15px;
}
.cube {
  margin-right: 16px;
}
.tray-arrow {
  margin-left: -2px;
}

/* Dock */
.workspace {
  flex: 1;
  display: flex;
  min-height: 0;
}
.dock {
  flex: none;
  display: flex;
  flex-direction: column;
  width: 67px;
  background: linear-gradient(#53393c, #4a323a 45%, #44313a 75%, #3d3435);
}
.dock-apps {
  flex: 1;
  min-height: 0;
  overflow: hidden;
}
.dock-app {
  position: relative;
  display: flex;
  align-items: center;
  justify-content: center;
  width: 62px;
  height: 62px;
  margin: 1px 2px 2px;
  border-radius: 4px;
}
.dock-app.running {
  background: rgba(255, 255, 255, 0.16);
}
.dock-app.running::before {
  content: "";
  position: absolute;
  left: 0;
  width: 6px;
  height: 6px;
  border-radius: 50%;
  background: #e95420;
}
.mark {
  position: absolute;
  color: #fff;
  font-family: "Liberation Mono", monospace;
  font-size: 16px;
  font-weight: 700;
}
.idea .mark {
  left: 17px;
  top: 14px;
}
.dbeaver .mark {
  left: 32px;
  top: 28px;
  width: 14px;
  font-family: "Liberation Sans", sans-serif;
  font-size: 8px;
  text-align: center;
}
.dock-grid {
  flex: none;
  display: flex;
  align-items: center;
  justify-content: center;
  width: 66px;
  height: 64px;
}

/* Browser window */
.window {
  flex: 1;
  display: flex;
  flex-direction: column;
  min-width: 0;
}
.titlebar {
  flex: none;
  display: grid;
  grid-template-columns: 1fr auto 1fr;
  align-items: center;
  height: 28px;
  background: linear-gradient(#3b3a36, #4e4b45);
  color: #dfdbd2;
  font-weight: 700;
}
.window-title {
  grid-column: 2;
}
.window-buttons {
  display: flex;
  justify-content: flex-end;
  gap: 4px;
  padding-right: 5px;
}
.window-buttons button {
  display: flex;
  align-items: center;
  justify-content: center;
  width: 16px;
  height: 16px;
  border-radius: 50%;
  background: linear-gradient(#8b8981, #67655e);
}
.window-buttons .close {
  background: linear-gradient(#f3825a, #dd4a1c);
}
.tabs {
  flex: none;
  display: flex;
  align-items: center;
  height: 34px;
  padding-left: 8px;
  background: #3c3b36;
  color: #d8d5cc;
}
.tab {
  position: relative;
  display: flex;
  align-items: center;
  width: 239px;
  height: 34px;
  box-sizing: border-box;
  padding: 0 11px 0 12px;
  gap: 8px;
}
.tab:first-child::after,
.tab:nth-child(2)::after {
  content: "";
  position: absolute;
  right: 0;
  width: 1px;
  height: 20px;
  background: #6d6b65;
}
.tab.current {
  border-radius: 8px 8px 0 0;
  background: #f2f1f0;
  color: #4a4a48;
}
.tab-title {
  flex: 1;
  overflow: hidden;
  white-space: nowrap;
  -webkit-mask-image: linear-gradient(90deg, #000 85%, transparent);
  mask-image: linear-gradient(90deg, #000 85%, transparent);
}
.tab-new {
  margin-left: 17px;
}
.tab-search {
  margin-left: auto;
  margin-right: 21px;
}
.toolbar {
  flex: none;
  display: flex;
  align-items: center;
  gap: 18px;
  height: 38px;
  padding: 0 20px 0 15px;
  border-bottom: 1px solid #cfcecd;
  background: #f2f1f0;
}
.omnibox {
  flex: 1;
  display: flex;
  align-items: center;
  gap: 18px;
  height: 30px;
  margin-left: -3px;
  padding: 0 11px 0 13px;
  border-radius: 15px;
  background: #fff;
}
.url {
  flex: 1;
  margin-left: -7px;
  color: #6b6b73;
  font-size: 14px;
  white-space: nowrap;
}
.url b {
  color: #26262b;
  font-weight: 400;
}
.ext {
  margin-right: -2px;
}
.picker {
  margin-left: -4px;
  margin-right: -8px;
}
.puzzle {
  margin-right: -4px;
}
.profile {
  margin-right: 2px;
}

/* Page */
.page {
  flex: 1;
  display: flex;
  min-height: 0;
  background: #fff;
  font: 13px/20px "Liberation Sans", Arial, sans-serif;
}
.sidebar {
  flex: none;
  display: flex;
  flex-direction: column;
  width: 216px;
  background: #f7f6f2;
  color: #74736e;
}
.user {
  display: flex;
  align-items: center;
  height: 40px;
  padding: 0 14px 0 15px;
  color: #37352f;
}
.avatar {
  width: 15px;
  height: 15px;
  margin: 1px 9px 0 0;
  border-radius: 2px;
  background: #0a9bab;
  color: #fff;
  font-size: 9px;
  line-height: 15px;
}
.user-name {
  flex: 1;
  text-align: left;
  white-space: nowrap;
}
.menu button,
.new-page {
  display: flex;
  align-items: center;
  gap: 10px;
  width: 100%;
  height: 24px;
  padding-left: 15px;
}
.main-menu {
  margin-top: 1px;
}
.menu .strong {
  color: #37352f;
}
.tree {
  display: grid;
  grid-auto-rows: 1fr;
  height: 535px;
  margin-top: 20px;
}
.row {
  display: flex;
  align-items: center;
  padding-left: 18px;
  white-space: nowrap;
}
.row.level-1 {
  padding-left: 31px;
}
.row.view {
  gap: 9px;
}
.row.add {
  gap: 10px;
  padding-left: 15px;
  color: #8a8984;
}
.row.active {
  background: #e7e7e2;
  color: #37352f;
  font-weight: 700;
}
.arrow {
  fill: #a3a29e;
}
.row-icon {
  width: 13px;
  height: 13px;
  margin: 0 7px 0 9px;
}
.row-icon.doc {
  width: 15px;
  height: 16px;
  margin: 0 6px 0 8px;
}
.level-0 .row-icon {
  margin-left: 10px;
}
.level-0 .row-icon.doc {
  margin-left: 9px;
}
.extras {
  margin-top: 18px;
}
.new-page {
  height: 41px;
  margin-top: auto;
  border-top: 1px solid #e6e5e1;
}
.content {
  position: relative;
  flex: 1;
  display: flex;
  flex-direction: column;
  min-width: 0;
}
.crumbs {
  flex: none;
  display: flex;
  align-items: center;
  justify-content: space-between;
  height: 41px;
  box-sizing: border-box;
  padding: 0 15px 2px 16px;
}
.page-actions {
  display: flex;
  align-items: center;
  gap: 16px;
}
.scroller {
  flex: 1;
  display: flex;
  min-height: 0;
}
.body {
  flex: 1;
  min-width: 0;
  padding: 31px 86px 0;
  overflow: hidden;
}
h1 {
  margin: 0 2px;
  font-size: 36px;
  line-height: 44px;
}
.views {
  display: flex;
  align-items: center;
  justify-content: space-between;
  height: 22px;
  margin-top: 16px;
}
.view-name {
  display: flex;
  align-items: center;
  gap: 4px;
  margin-left: 6px;
  font-weight: 700;
}
.view-name span {
  margin-left: 1px;
}
.tools {
  display: flex;
  align-items: center;
  gap: 13px;
  color: #8a8984;
  white-space: nowrap;
}
.tools > button {
  padding-bottom: 1px;
}
.tools b {
  color: #37352f;
  font-weight: 400;
}
.tight {
  margin: 0 -3px;
}
.group {
  display: flex;
  align-items: center;
  gap: 4px;
}
.badge {
  padding: 0 3px;
  border-radius: 3px;
  background: #dededc;
  color: #7b7a76;
  font-size: 9px;
  font-weight: 700;
  line-height: 12px;
}
.search {
  display: flex;
  align-items: center;
  gap: 6px;
}
.new {
  display: flex;
  height: 22px;
  border-radius: 3px;
  background: #2ea5de;
  box-shadow: inset 0 0 0 1px rgba(15, 15, 15, 0.1);
  color: #fff;
}
.new button {
  padding: 0 6px;
}
.new .new-more {
  padding: 0 7px;
  border-left: 1px solid #2590c6;
}
.month {
  display: flex;
  align-items: center;
  justify-content: space-between;
  height: 25px;
  margin-top: 15px;
}
h2 {
  margin: 0 7px;
  font-size: 13px;
  line-height: 20px;
}
.pager {
  display: flex;
  align-items: center;
  gap: 12px;
  padding-right: 7px;
}
.weekdays {
  display: grid;
  grid-template-columns: repeat(7, 1fr);
  height: 28px;
  color: #acaba8;
  font-size: 11px;
  line-height: 28px;
  text-align: center;
}
.grid {
  display: grid;
  grid-template-columns: repeat(7, minmax(0, 1fr));
  grid-auto-rows: 1fr;
  height: 781px;
  border: solid #e9e9e7;
  border-width: 1px 0 0 1px;
}
.day {
  display: flex;
  flex-direction: column;
  gap: 5px;
  padding: 3px 3px 3px 5px;
  border: solid #e9e9e7;
  border-width: 0 1px 1px 0;
}
.day.weekend {
  background: #f7f6f3;
}
.day-head {
  display: flex;
  align-items: center;
  height: 21px;
}
.num {
  margin-left: auto;
  padding: 0 6px;
}
.num.muted {
  color: #a9a8a5;
}
.num.today {
  width: 22px;
  height: 22px;
  margin-right: 1px;
  padding: 0;
  border-radius: 50%;
  background: #f2384f;
  color: #fff;
  line-height: 22px;
  text-align: center;
}
.add-card {
  display: flex;
  align-items: center;
  justify-content: center;
  width: 18px;
  height: 18px;
  margin-left: 1px;
  border-radius: 3px;
  background: #fff;
  box-shadow: 0 0 0 1px #dededc, 0 2px 3px rgba(15, 15, 15, 0.12);
}
.event {
  height: 20px;
  margin: 1px;
  padding: 0 5px;
  border-radius: 3px;
  background: #fff;
  box-shadow: 0 0 0 1px #e2e2e0, 0 2px 3px rgba(15, 15, 15, 0.12);
  font-size: 11px;
  font-weight: 700;
  line-height: 20px;
}
.scrollbar {
  flex: none;
  display: flex;
  flex-direction: column;
  width: 10px;
  background: #edece9;
}
.scrollbar::after {
  content: "";
  flex: 3;
}
.thumb {
  flex: 5;
  background: #d3d1cb;
}
.help {
  position: absolute;
  right: 22px;
  bottom: 22px;
  width: 35px;
  height: 35px;
  border-radius: 50%;
  background: #fff;
  box-shadow: 0 0 0 1px #e4e4e2, 0 2px 4px rgba(15, 15, 15, 0.15);
  font-size: 18px;
}

/* Screenshot dialog, almost faded out */
.ghost {
  position: absolute;
  left: 834px;
  top: 415px;
  width: 317px;
  height: 268px;
  border-radius: 5px 5px 0 0;
  background: #f8f7f6;
  box-shadow: 0 4px 20px rgba(0, 0, 0, 0.4);
  color: #3c3c3c;
  font-size: 13px;
  line-height: 20px;
  opacity: 0.03;
  pointer-events: none;
}
.ghost-head {
  display: flex;
  align-items: center;
  justify-content: space-between;
  height: 32px;
  padding: 0 9px 0 40px;
  border-radius: 5px 5px 0 0;
  background: #3c3b37;
  color: #fff;
}
.take {
  height: 26px;
  padding: 0 3px;
  border-radius: 3px;
  background: #3f8a5a;
  font-size: 12px;
}
.ghost-body {
  display: flex;
  flex-direction: column;
  padding: 6px 9px;
}
.ghost label,
.ghost-grab,
.ghost-delay,
.ghost-effect {
  display: flex;
  align-items: center;
  gap: 4px;
}
.ghost .ghost-grab {
  align-items: flex-end;
  gap: 16px;
}
.ghost input[type="radio"],
.ghost input[type="checkbox"] {
  width: 10px;
  height: 10px;
  margin: 0;
  accent-color: #e95420;
}
.ghost-delay {
  height: 30px;
  padding-left: 48px;
  font-size: 12px;
  white-space: nowrap;
}
.spin {
  display: flex;
  border: 1px solid #888;
}
.spin input {
  width: 26px;
  padding: 0 6px;
  border: 0;
  font: inherit;
}
.spin button {
  width: 22px;
}
.ghost-delay + strong {
  margin-top: 8px;
}
.ghost-check {
  padding-left: 14px;
}
.ghost-effect {
  height: 32px;
  padding-left: 10px;
}
.ghost select {
  width: 95px;
  height: 24px;
  font: inherit;
}
</style>
